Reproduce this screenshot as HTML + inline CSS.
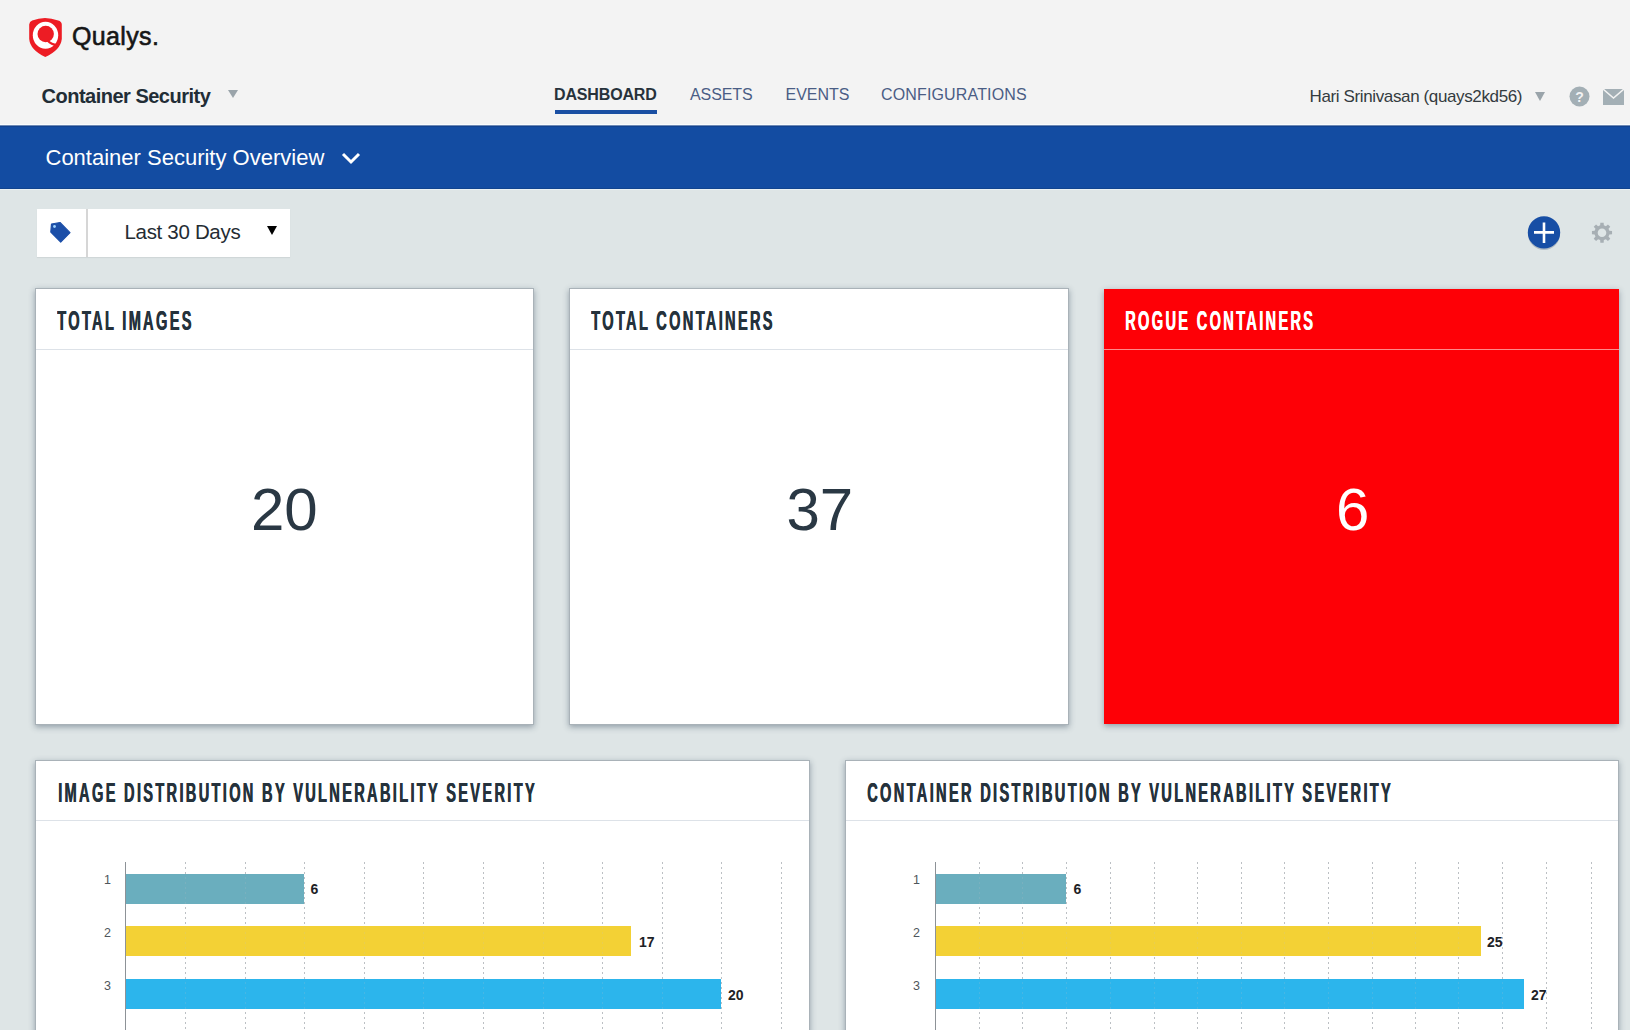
<!DOCTYPE html>
<html><head><meta charset="utf-8">
<style>
*{margin:0;padding:0;box-sizing:border-box}
html,body{width:1630px;height:1030px;overflow:hidden;background:#dee5e6;font-family:"Liberation Sans",sans-serif}
.a{position:absolute;white-space:nowrap;line-height:1}
#hdr{position:absolute;left:0;top:0;width:1630px;height:125px;background:#f3f3f3}
#bar{position:absolute;left:0;top:125px;width:1630px;height:64px;background:linear-gradient(#6d89b5 0,#6d89b5 1px,#12428f 1px,#12428f 2px,#134ca2 2px,#134ca2 63px,#11448f 63px)}
.card{position:absolute;background:#fff;border:1px solid #a9b2b8;box-shadow:0 2px 6px rgba(40,60,80,.42)}
.ttl{position:absolute;font-weight:bold;font-size:27px;line-height:1;color:#25323c;transform:scaleX(.541);transform-origin:0 0;white-space:nowrap;letter-spacing:4.28px;text-shadow:0.9px 0 0 currentColor}
.sep{position:absolute;left:0;right:0;height:1px;background:#dde2e8}
.num{position:absolute;font-size:60px;line-height:1;color:#2a3844;white-space:nowrap}
.grid{position:absolute;width:1px;background-image:linear-gradient(#bcc0c4 40%,transparent 40%);background-size:1px 5px}
.g2{opacity:.18}
.bar{position:absolute;height:30px}
.yl{position:absolute;font-size:12.5px;line-height:1;color:#4f565c}
.vl{position:absolute;font-size:14px;font-weight:bold;line-height:1;color:#1e2226}
</style></head><body>
<div id="hdr"></div>
<!-- logo -->
<svg class="a" style="left:27px;top:15px" width="38" height="45" viewBox="0 0 38 45">
  <path d="M2.2 9.5 Q2.4 6.6 5.2 5.6 Q17.8 0.6 31.2 5.6 Q34.6 6.6 34.8 9.5 L34.8 24 Q33.6 35 18.3 42 Q3.2 35 2.2 24 Z" fill="#ed1c24"/>
  <ellipse cx="18.5" cy="20.2" rx="12.7" ry="13.5" fill="#fff"/>
  <circle cx="18.7" cy="19" r="8.2" fill="#ed1c24"/>
  <path d="M20.5 25.5 Q24.5 29.5 30 30.2" fill="none" stroke="#ed1c24" stroke-width="2.3"/>
</svg>
<div class="a" style="left:72px;top:24px;font-size:25px;color:#161616;-webkit-text-stroke:0.6px #161616;letter-spacing:0.35px">Qualys.</div>
<div class="a" style="left:41.5px;top:85.6px;font-size:20px;font-weight:bold;color:#222d36;letter-spacing:-0.5px">Container Security</div>
<div class="a" style="left:228px;top:90px;width:0;height:0;border-left:5px solid transparent;border-right:5px solid transparent;border-top:8px solid #9aa4aa"></div>
<!-- nav -->
<div class="a" style="left:554px;top:87px;font-size:16px;font-weight:bold;color:#27323b;letter-spacing:-0.15px">DASHBOARD</div>
<div class="a" style="left:555px;top:110px;width:102px;height:4px;background:#1a4fa3"></div>
<div class="a" style="left:690px;top:87px;font-size:16px;color:#4a5d85;letter-spacing:-0.1px">ASSETS</div>
<div class="a" style="left:785.5px;top:87px;font-size:16px;color:#4a5d85;letter-spacing:0px">EVENTS</div>
<div class="a" style="left:881px;top:87px;font-size:16px;color:#4a5d85;letter-spacing:0.15px">CONFIGURATIONS</div>
<!-- user -->
<div class="a" style="left:1309.5px;top:88px;font-size:17px;color:#333b40;letter-spacing:-0.37px">Hari Srinivasan (quays2kd56)</div>
<div class="a" style="left:1535px;top:92px;width:0;height:0;border-left:5px solid transparent;border-right:5px solid transparent;border-top:9px solid #9aa4aa"></div>
<svg class="a" style="left:1569px;top:86px" width="21" height="21" viewBox="0 0 21 21"><circle cx="10.5" cy="10.5" r="10" fill="#a3afb5"/><text x="10.5" y="15.5" text-anchor="middle" font-family="Liberation Sans" font-weight="bold" font-size="14" fill="#f3f3f3">?</text></svg>
<svg class="a" style="left:1603px;top:89px" width="21" height="16" viewBox="0 0 21 16"><rect x="0" y="0" width="21" height="16" fill="#a3afb5"/><path d="M0 0 L10.5 9 L21 0" fill="none" stroke="#f3f3f3" stroke-width="1.5"/></svg>
<!-- blue bar -->
<div class="a" style="left:0;top:124px;width:1630px;height:1px;background:#fafcfc"></div>
<div id="bar"></div>
<div class="a" style="left:0;top:189px;width:1630px;height:1px;background:#e9f0f3"></div>
<div class="a" style="left:45.5px;top:146.6px;font-size:22px;color:#fff">Container Security Overview</div>
<svg class="a" style="left:340px;top:151px" width="22" height="14" viewBox="0 0 22 14"><path d="M3 3 L11 11 L19 3" fill="none" stroke="#fff" stroke-width="3"/></svg>
<!-- filter -->
<div class="a" style="left:37px;top:209px;width:253px;height:48px;background:#fff;box-shadow:0 1px 1px rgba(0,0,0,.06)"></div>
<div class="a" style="left:86px;top:209px;width:2px;height:48px;background:#d6d6d6"></div>
<svg class="a" style="left:45px;top:217px" width="30" height="30" viewBox="0 0 30 30"><path d="M6.5 7 L15 5.5 L25 15.7 L15.7 25 L5.8 15 Z" fill="#1c4fa8" stroke="#1c4fa8" stroke-width="1.2" stroke-linejoin="round"/><circle cx="9.5" cy="9.5" r="1.4" fill="#9fd4ff"/></svg>
<div class="a" style="left:124.5px;top:221.5px;font-size:20.5px;color:#242c33;letter-spacing:-0.32px">Last 30 Days</div>
<div class="a" style="left:267px;top:226px;width:0;height:0;border-left:5px solid transparent;border-right:5px solid transparent;border-top:9px solid #000"></div>
<!-- plus & gear -->
<svg class="a" style="left:1524px;top:212px" width="40" height="42" viewBox="0 0 40 42"><circle cx="20" cy="22" r="16" fill="rgba(40,60,90,.25)"/><circle cx="20" cy="20.4" r="16.2" fill="#174ea5"/><path d="M10 20.4 H30 M20 10.5 V31" stroke="#fff" stroke-width="2.6"/></svg>
<svg class="a" style="left:1590px;top:221px" width="24" height="24" viewBox="0 0 24 24"><path transform="translate(12 11.7)" fill="#a7afb4" fill-rule="evenodd" d="M-1.67 -10.06 L1.67 -10.06 L1.83 -7.38 L3.92 -6.51 L5.93 -8.30 L8.30 -5.93 L6.51 -3.92 L7.38 -1.83 L10.06 -1.67 L10.06 1.67 L7.38 1.83 L6.51 3.92 L8.30 5.93 L5.93 8.30 L3.92 6.51 L1.83 7.38 L1.67 10.06 L-1.67 10.06 L-1.83 7.38 L-3.92 6.51 L-5.93 8.30 L-8.30 5.93 L-6.51 3.92 L-7.38 1.83 L-10.06 1.67 L-10.06 -1.67 L-7.38 -1.83 L-6.51 -3.92 L-8.30 -5.93 L-5.93 -8.30 L-3.92 -6.51 L-1.83 -7.38 Z M0 -4.3 A4.3 4.3 0 1 0 0 4.3 A4.3 4.3 0 1 0 0 -4.3 Z"/></svg>

<!-- cards top -->
<div class="card" style="left:35px;top:288px;width:499px;height:437px">
  <div class="ttl" style="left:20.5px;top:19px">TOTAL IMAGES</div>
  <div class="sep" style="top:60px"></div>
  <div class="num" style="left:215px;top:191px">20</div>
</div>
<div class="card" style="left:569px;top:288px;width:500px;height:437px">
  <div class="ttl" style="left:21.2px;top:19px">TOTAL CONTAINERS</div>
  <div class="sep" style="top:60px"></div>
  <div class="num" style="left:216.5px;top:191px">37</div>
</div>
<div class="card" style="left:1104px;top:289px;width:515px;height:435px;background:#fe0006;border:none;box-shadow:0 2px 6px rgba(40,60,80,.42)">
  <div class="ttl" style="left:21px;top:19px;color:#fff">ROGUE CONTAINERS</div>
  <div class="sep" style="top:60px;background:#ff8a8a"></div>
  <div class="num" style="left:232px;top:191px;color:#fff">6</div>
</div>

<!-- bottom cards -->
<div class="card" style="left:35px;top:760px;width:775px;height:300px">
  <div class="ttl" style="left:22px;top:19px">IMAGE DISTRIBUTION BY VULNERABILITY SEVERITY</div>
  <div class="sep" style="top:59px"></div>
</div>
<div class="card" style="left:845px;top:760px;width:774px;height:300px">
  <div class="ttl" style="left:21px;top:19px">CONTAINER DISTRIBUTION BY VULNERABILITY SEVERITY</div>
  <div class="sep" style="top:59px"></div>
</div>
<div id="charts">
<div class="grid" style="left:185px;top:862px;height:168px"></div>
<div class="grid" style="left:245px;top:862px;height:168px"></div>
<div class="grid" style="left:304px;top:862px;height:168px"></div>
<div class="grid" style="left:364px;top:862px;height:168px"></div>
<div class="grid" style="left:423px;top:862px;height:168px"></div>
<div class="grid" style="left:483px;top:862px;height:168px"></div>
<div class="grid" style="left:543px;top:862px;height:168px"></div>
<div class="grid" style="left:602px;top:862px;height:168px"></div>
<div class="grid" style="left:662px;top:862px;height:168px"></div>
<div class="grid" style="left:721px;top:862px;height:168px"></div>
<div class="grid" style="left:781px;top:862px;height:168px"></div>
<div class="bar" style="left:126px;top:874px;width:178px;background:#6aaebe"></div>
<div class="yl" style="left:104px;top:873.5px">1</div>
<div class="vl" style="left:310.5px;top:882px">6</div>
<div class="bar" style="left:126px;top:926px;width:505px;background:#f3d135"></div>
<div class="yl" style="left:104px;top:926.5px">2</div>
<div class="vl" style="left:639px;top:934.5px">17</div>
<div class="bar" style="left:126px;top:979px;width:595px;background:#2cb5ec"></div>
<div class="yl" style="left:104px;top:979.5px">3</div>
<div class="vl" style="left:728px;top:988px">20</div>
<div class="grid g2" style="left:185px;top:862px;height:168px"></div>
<div class="grid g2" style="left:245px;top:862px;height:168px"></div>
<div class="grid g2" style="left:304px;top:862px;height:168px"></div>
<div class="grid g2" style="left:364px;top:862px;height:168px"></div>
<div class="grid g2" style="left:423px;top:862px;height:168px"></div>
<div class="grid g2" style="left:483px;top:862px;height:168px"></div>
<div class="grid g2" style="left:543px;top:862px;height:168px"></div>
<div class="grid g2" style="left:602px;top:862px;height:168px"></div>
<div class="grid g2" style="left:662px;top:862px;height:168px"></div>
<div class="grid g2" style="left:721px;top:862px;height:168px"></div>
<div class="grid g2" style="left:781px;top:862px;height:168px"></div>
<div class="a" style="left:125px;top:862px;width:1px;height:168px;background:#8d9297"></div>
<div class="grid" style="left:979px;top:862px;height:168px"></div>
<div class="grid" style="left:1022px;top:862px;height:168px"></div>
<div class="grid" style="left:1066px;top:862px;height:168px"></div>
<div class="grid" style="left:1110px;top:862px;height:168px"></div>
<div class="grid" style="left:1154px;top:862px;height:168px"></div>
<div class="grid" style="left:1197px;top:862px;height:168px"></div>
<div class="grid" style="left:1241px;top:862px;height:168px"></div>
<div class="grid" style="left:1284px;top:862px;height:168px"></div>
<div class="grid" style="left:1328px;top:862px;height:168px"></div>
<div class="grid" style="left:1372px;top:862px;height:168px"></div>
<div class="grid" style="left:1415px;top:862px;height:168px"></div>
<div class="grid" style="left:1458px;top:862px;height:168px"></div>
<div class="grid" style="left:1502px;top:862px;height:168px"></div>
<div class="grid" style="left:1546px;top:862px;height:168px"></div>
<div class="grid" style="left:1591px;top:862px;height:168px"></div>
<div class="bar" style="left:936px;top:874px;width:130px;background:#6aaebe"></div>
<div class="yl" style="left:913px;top:873.5px">1</div>
<div class="vl" style="left:1073.5px;top:882px">6</div>
<div class="bar" style="left:936px;top:926px;width:545px;background:#f3d135"></div>
<div class="yl" style="left:913px;top:926.5px">2</div>
<div class="vl" style="left:1487px;top:934.5px">25</div>
<div class="bar" style="left:936px;top:979px;width:588px;background:#2cb5ec"></div>
<div class="yl" style="left:913px;top:979.5px">3</div>
<div class="vl" style="left:1531px;top:988px">27</div>
<div class="grid g2" style="left:979px;top:862px;height:168px"></div>
<div class="grid g2" style="left:1022px;top:862px;height:168px"></div>
<div class="grid g2" style="left:1066px;top:862px;height:168px"></div>
<div class="grid g2" style="left:1110px;top:862px;height:168px"></div>
<div class="grid g2" style="left:1154px;top:862px;height:168px"></div>
<div class="grid g2" style="left:1197px;top:862px;height:168px"></div>
<div class="grid g2" style="left:1241px;top:862px;height:168px"></div>
<div class="grid g2" style="left:1284px;top:862px;height:168px"></div>
<div class="grid g2" style="left:1328px;top:862px;height:168px"></div>
<div class="grid g2" style="left:1372px;top:862px;height:168px"></div>
<div class="grid g2" style="left:1415px;top:862px;height:168px"></div>
<div class="grid g2" style="left:1458px;top:862px;height:168px"></div>
<div class="grid g2" style="left:1502px;top:862px;height:168px"></div>
<div class="grid g2" style="left:1546px;top:862px;height:168px"></div>
<div class="grid g2" style="left:1591px;top:862px;height:168px"></div>
<div class="a" style="left:935px;top:862px;width:1px;height:168px;background:#8d9297"></div>
</div>
</body></html>
